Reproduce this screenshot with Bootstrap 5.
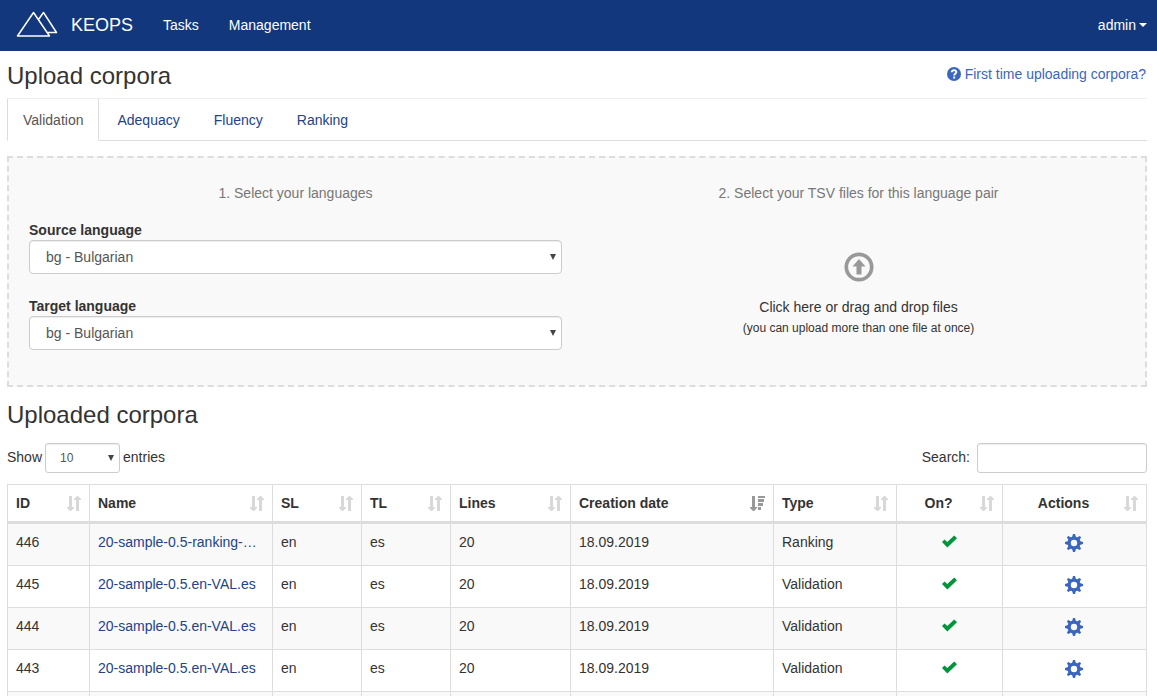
<!DOCTYPE html>
<html lang="en">
<head>
<meta charset="utf-8">
<meta name="viewport" content="width=device-width, initial-scale=1">
<title>KEOPS</title>
<link rel="stylesheet" href="https://cdn.jsdelivr.net/npm/bootstrap@5.3.0/dist/css/bootstrap.min.css">
<style>
  body { font-family: "Liberation Sans", Arial, sans-serif; font-size: 14px; line-height: 20px; color: #333; }
  a { color: #22438a; text-decoration: none; }
  .topbar { background: #12377d; min-height: 51px; padding: 0 10px 2px 16px; }
  .topbar .navbar-brand { font-size: 18px; line-height: 20px; padding: 0; margin: 0 30px 0 0; color: #fff; gap: 13px; }
  .topbar .menu-links .nav-link, .user-btn { color: #fff; padding: 0; }
  .menu-links { gap: 30px; }
  .user-btn { border: 0; background: none; gap: 3px; }
  .user-btn::after { content: ""; border-top: 4px solid; border-left: 4px solid transparent; border-right: 4px solid transparent; }
  .page { padding: 0 10px 0 7px; }
  h1, h2 { font-size: 24px; line-height: 26px; margin: 0; font-weight: 400; }
  .page-title { padding: 12px 0 9px; border-bottom: 1px solid #eee; }
  .help-link { color: #3a66c0; gap: 4px; margin-right: 1px; margin-bottom: 4px; }
  .nav-tabs { border-bottom: 1px solid #ddd; gap: 2px; }
  .nav-tabs .nav-link { color: #22438a; padding: 11px 15px 10px; border: 1px solid transparent; border-top: 0; border-radius: 0; margin-bottom: -1px; }
  .nav-tabs .nav-link.active { color: #555; border-color: #ddd #ddd #fff; }
  .upload-box { margin-top: 15px; padding: 25px 5px 35px; border: 2px dashed #ddd; background: #f9f9f9; }
  .upload-box > div { padding: 0 15px; }
  .step { color: #777; margin: 0 0 17px; text-align: center; }
  .upload-box label { font-weight: 700; display: block; }
  .target-label { margin-top: 22px; }
  .form-select, .form-control { border: 1px solid #ccc; border-radius: 4px; color: #555; box-shadow: inset 0 1px 1px rgba(0,0,0,.075); }
  .form-select { height: 34px; font-size: 14px; line-height: 20px; padding: 6px 24px 6px 16px; background-image: url("data:image/svg+xml,%3Csvg xmlns='http://www.w3.org/2000/svg' viewBox='0 0 6 6'%3E%3Cpath d='M0 0h6L3 6z' fill='%23444'/%3E%3C/svg%3E"); background-size: 6px 6px; background-position: right 5px center; }
  .length-select { width: 75px; height: 30px; font-size: 12px; line-height: 18px; padding: 5px 20px 5px 14px; border-radius: 3px; }
  .length-row { gap: 3px; }
  .search-row { gap: 7px; }
  .search-input { width: 170px; height: 30px; border-radius: 3px; }
  .drop-zone { border: 0; background: none; padding: 0; color: #333; line-height: 20px; margin-top: 32px; }
  .drop-zone svg { margin-bottom: 15px; }
  .drop-zone small { font-size: 12px; margin-top: 1px; }
  .list-title { margin: 15px 0; }
  .corpora { table-layout: fixed; width: 100%; border-collapse: separate; border-spacing: 0; border: 0 solid #ddd; border-width: 1px 0 0 1px; margin-top: 11px; }
  .corpora th, .corpora td { border: 0 solid #ddd; border-width: 0 1px 1px 0; padding: 8px; vertical-align: top; }
  .corpora th { border-bottom-width: 3px; }
  .corpora td { height: 42px; }
  .corpora tbody tr:nth-child(odd) { background: #f9f9f9; }
  .corpora svg { display: block; margin: 0 auto; }
  .sort-btn { width: 100%; height: 20px; border: 0; background: none; padding: 0; font-weight: 700; color: #333; }
  .sort-btn svg { margin: 0; color: #d8d8d8; flex: none; }
  .sort-btn .sorted { color: #999; }
  .centred span { flex: 1; text-align: center; padding-right: 8px; }
  .icon-btn { border: 0; background: none; padding: 2px 2px 0 0; width: 100%; }
  .c-id { width: 82px } .c-name { width: 183px } .c-lang { width: 89px } .c-lines { width: 120px }
  .c-date { width: 203px } .c-type { width: 123px } .c-on { width: 106px } .c-act { width: 144px }
</style>
<script src="https://cdn.jsdelivr.net/npm/bootstrap@5.3.0/dist/js/bootstrap.bundle.min.js"></script>
</head>
<body>
<svg class="d-none" aria-hidden="true">
  <symbol id="sort" viewBox="0 0 14 15"><path fill="currentColor" d="M2 0h3v11h2v1l-3 3H3L0 12v-1h2zM9 15V4H7V3l3-3h1l3 3v1h-2v11z"/></symbol>
  <symbol id="sort-desc" viewBox="0 0 15 15"><path fill="currentColor" d="M2 0h3v11h2v1l-3 3H3L0 12v-1h2zM8 0h7v2H8zM8 3h6v3H8zM8 7h5v3H8zM8 11h3v3H8z"/></symbol>
  <symbol id="tick" viewBox="0 0 15 12"><path fill="#00953a" d="M0 6.500 2.500 4 5.300 6.500 12.200 0 15 2.700 5.300 12z"/></symbol>
  <symbol id="gear" viewBox="0 0 18 18"><g fill="#3a66c0"><path fill-rule="evenodd" d="M9 2.500a6.500 6.500 0 1 0 0 13a6.500 6.500 0 1 0 0-13zM9 5.800a3.200 3.200 0 1 1 0 6.400a3.200 3.200 0 1 1 0-6.400z"/><path d="M8 0h2l1.200 4H6.800zM8 18h2l1.200-4H6.800zM0 8v2l4 1.200V6.800zM18 8v2l-4 1.200V6.800z"/><path transform="rotate(45 9 9)" d="M8 0h2l1.200 4H6.800zM8 18h2l1.200-4H6.800zM0 8v2l4 1.200V6.800zM18 8v2l-4 1.200V6.800z"/></g></symbol>
</svg>

<nav class="navbar navbar-expand topbar">
  <a class="navbar-brand d-flex align-items-center" href="#">
    <svg width="42" height="27" viewBox="0 0 42 27" fill="none" stroke="#fff" stroke-width="1.500" stroke-linejoin="round" aria-hidden="true"><path d="M17.500 1.500 33.500 25H1.500zM22.500 8.500 27.500 1.500 40.500 21.500H31"/></svg>
    KEOPS
  </a>
  <div class="navbar-nav menu-links me-auto">
    <a class="nav-link" href="#">Tasks</a>
    <a class="nav-link" href="#">Management</a>
  </div>
  <button class="user-btn d-flex align-items-center" type="button">admin</button>
</nav>

<main class="page">
  <header class="page-title d-flex justify-content-between align-items-center">
    <h1>Upload corpora</h1>
    <a class="help-link d-flex align-items-center" href="#">
      <svg width="14" height="14" viewBox="0 0 14 14" aria-hidden="true"><circle cx="7" cy="7" r="7" fill="#3a66c0"/><path d="M4.700 5.300C4.700 2.300 9.500 2.500 9.300 5.200 9.200 6.700 7.200 6.600 7.200 8.400" fill="none" stroke="#fff" stroke-width="1.900"/><path d="M6.200 9.500h2v2h-2z" fill="#fff"/></svg>
      First time uploading corpora?
    </a>
  </header>

  <ul class="nav nav-tabs">
    <li class="nav-item"><a class="nav-link active" href="#">Validation</a></li>
    <li class="nav-item"><a class="nav-link" href="#">Adequacy</a></li>
    <li class="nav-item"><a class="nav-link" href="#">Fluency</a></li>
    <li class="nav-item"><a class="nav-link" href="#">Ranking</a></li>
  </ul>

  <section class="upload-box d-flex">
    <div class="w-50">
      <p class="step">1. Select your languages</p>
      <label for="source">Source language</label>
      <select class="form-select" id="source"><option>bg - Bulgarian</option></select>
      <label class="target-label" for="target">Target language</label>
      <select class="form-select" id="target"><option>bg - Bulgarian</option></select>
    </div>
    <div class="w-50 d-flex flex-column">
      <p class="step">2. Select your TSV files for this language pair</p>
      <button class="drop-zone d-flex flex-column align-items-center" type="button">
        <svg width="30" height="30" viewBox="0 0 30 30" fill="#999" aria-hidden="true"><circle cx="15" cy="15" r="12.700" fill="none" stroke="#999" stroke-width="3.700"/><path d="M15 7 21.500 14.500H17.500V22.500H12.500V14.500H8.500z"/></svg>
        <span>Click here or drag and drop files</span>
        <small>(you can upload more than one file at once)</small>
      </button>
    </div>
  </section>

  <h2 class="list-title">Uploaded corpora</h2>

  <div class="d-flex justify-content-between">
    <div class="length-row d-flex align-items-start">
      <label class="pt-1" for="length">Show</label>
      <select class="form-select length-select" id="length"><option>10</option></select>
      <span class="pt-1">entries</span>
    </div>
    <div class="search-row d-flex align-items-start">
      <label class="pt-1" for="search">Search:</label>
      <input class="form-control search-input" id="search" type="search">
    </div>
  </div>

  <table class="corpora">
    <colgroup><col class="c-id"><col class="c-name"><col class="c-lang"><col class="c-lang"><col class="c-lines"><col class="c-date"><col class="c-type"><col class="c-on"><col class="c-act"></colgroup>
    <thead>
      <tr>
        <th><button class="sort-btn d-flex justify-content-between align-items-center"><span>ID</span><svg width="14" height="15"><use href="#sort"/></svg></button></th>
        <th><button class="sort-btn d-flex justify-content-between align-items-center"><span>Name</span><svg width="14" height="15"><use href="#sort"/></svg></button></th>
        <th><button class="sort-btn d-flex justify-content-between align-items-center"><span>SL</span><svg width="14" height="15"><use href="#sort"/></svg></button></th>
        <th><button class="sort-btn d-flex justify-content-between align-items-center"><span>TL</span><svg width="14" height="15"><use href="#sort"/></svg></button></th>
        <th><button class="sort-btn d-flex justify-content-between align-items-center"><span>Lines</span><svg width="14" height="15"><use href="#sort"/></svg></button></th>
        <th><button class="sort-btn d-flex justify-content-between align-items-center"><span>Creation date</span><svg class="sorted" width="15" height="15"><use href="#sort-desc"/></svg></button></th>
        <th><button class="sort-btn d-flex justify-content-between align-items-center"><span>Type</span><svg width="14" height="15"><use href="#sort"/></svg></button></th>
        <th><button class="sort-btn centred d-flex align-items-center"><span>On?</span><svg width="14" height="15"><use href="#sort"/></svg></button></th>
        <th><button class="sort-btn centred d-flex align-items-center"><span>Actions</span><svg width="14" height="15"><use href="#sort"/></svg></button></th>
      </tr>
    </thead>
    <tbody>
      <tr><td>446</td><td><a href="#">20-sample-0.5-ranking-…</a></td><td>en</td><td>es</td><td>20</td><td>18.09.2019</td><td>Ranking</td><td><svg width="15" height="19"><use href="#tick"/></svg></td><td><button class="icon-btn" aria-label="Actions"><svg width="18" height="18"><use href="#gear"/></svg></button></td></tr>
      <tr><td>445</td><td><a href="#">20-sample-0.5.en-VAL.es</a></td><td>en</td><td>es</td><td>20</td><td>18.09.2019</td><td>Validation</td><td><svg width="15" height="19"><use href="#tick"/></svg></td><td><button class="icon-btn" aria-label="Actions"><svg width="18" height="18"><use href="#gear"/></svg></button></td></tr>
      <tr><td>444</td><td><a href="#">20-sample-0.5.en-VAL.es</a></td><td>en</td><td>es</td><td>20</td><td>18.09.2019</td><td>Validation</td><td><svg width="15" height="19"><use href="#tick"/></svg></td><td><button class="icon-btn" aria-label="Actions"><svg width="18" height="18"><use href="#gear"/></svg></button></td></tr>
      <tr><td>443</td><td><a href="#">20-sample-0.5.en-VAL.es</a></td><td>en</td><td>es</td><td>20</td><td>18.09.2019</td><td>Validation</td><td><svg width="15" height="19"><use href="#tick"/></svg></td><td><button class="icon-btn" aria-label="Actions"><svg width="18" height="18"><use href="#gear"/></svg></button></td></tr>
      <tr><td></td><td></td><td></td><td></td><td></td><td></td><td></td><td></td><td></td></tr>
    </tbody>
  </table>
</main>
</body>
</html>
